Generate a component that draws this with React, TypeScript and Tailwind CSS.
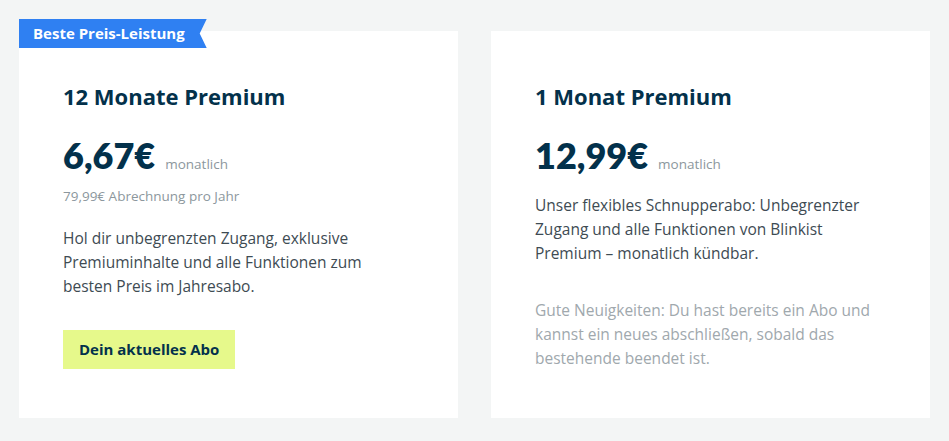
const plans = [
  {
    title: "12 Monate Premium",
    price: "6,67€",
    note: "79,99€ Abrechnung pro Jahr",
    text: "Hol dir unbegrenzten Zugang, exklusive Premiuminhalte und alle Funktionen zum besten Preis im Jahresabo.",
    badge: "Beste Preis-Leistung",
    current: true,
  },
  {
    title: "1 Monat Premium",
    price: "12,99€",
    text: "Unser flexibles Schnupperabo: Unbegrenzter Zugang und alle Funktionen von Blinkist Premium – monatlich kündbar.",
    hint: "Gute Neuigkeiten: Du hast bereits ein Abo und kannst ein neues abschließen, sobald das bestehende beendet ist.",
  },
];

type Plan = (typeof plans)[number] & { note?: string; badge?: string; current?: boolean; hint?: string };

const PlanCard = ({ plan }: { plan: Plan }) => {
  return (
    <div className="relative bg-white pl-[44px] pr-[48px] pt-[51px] pb-[48px]">
      {plan.badge && (
        <div
          className="absolute left-0 top-[-12px] flex h-[29px] items-center bg-[#2f80f2] pl-[14px] pr-[22px] text-[15px] font-bold text-white"
          style={{ clipPath: "polygon(0 0, 100% 0, calc(100% - 7px) 50%, 100% 100%, 0 100%)" }}
        >
          {plan.badge}
        </div>
      )}

      {/* Title */}
      <h2 className="text-[22px] font-bold leading-[28px] text-[#03314b]">{plan.title}</h2>

      {/* Price */}
      <div className="mt-[25px] flex items-baseline gap-[10px]">
        <span className="font-['Lato'] text-[36px] font-extrabold leading-[40px] text-[#03314b]">{plan.price}</span>
        <span className="text-[13.5px] text-[#8c979d]">monatlich</span>
      </div>

      {plan.note && <p className="mt-[11px] text-[13.5px] leading-[20px] text-[#8c979d]">{plan.note}</p>}

      <p className={`${plan.note ? "mt-[20px]" : "mt-[18px]"} text-[15.5px] leading-[24px] text-[#3e4b53]`}>
        {plan.text}
      </p>

      {plan.hint && <p className="mt-[33px] text-[15.5px] leading-[24px] text-[#a0a8ad]">{plan.hint}</p>}

      {plan.current && (
        <button className="mt-[32px] h-[39px] bg-[#e6f98b] px-[16px] text-[15px] font-bold text-[#03314b]">
          Dein aktuelles Abo
        </button>
      )}
    </div>
  );
};

export default function App() {
  return (
    <div
      className="min-h-[441px] bg-[#f3f5f5] px-[19px] pt-[31px] pb-[24px]"
      style={{ fontFamily: "'Open Sans', 'Noto Sans', sans-serif" }}
    >
      <div className="grid h-[386px] grid-cols-2 gap-[33px]">
        {plans.map((p, i) => (
          <PlanCard key={i} plan={p as Plan} />
        ))}
      </div>
    </div>
  );
}
